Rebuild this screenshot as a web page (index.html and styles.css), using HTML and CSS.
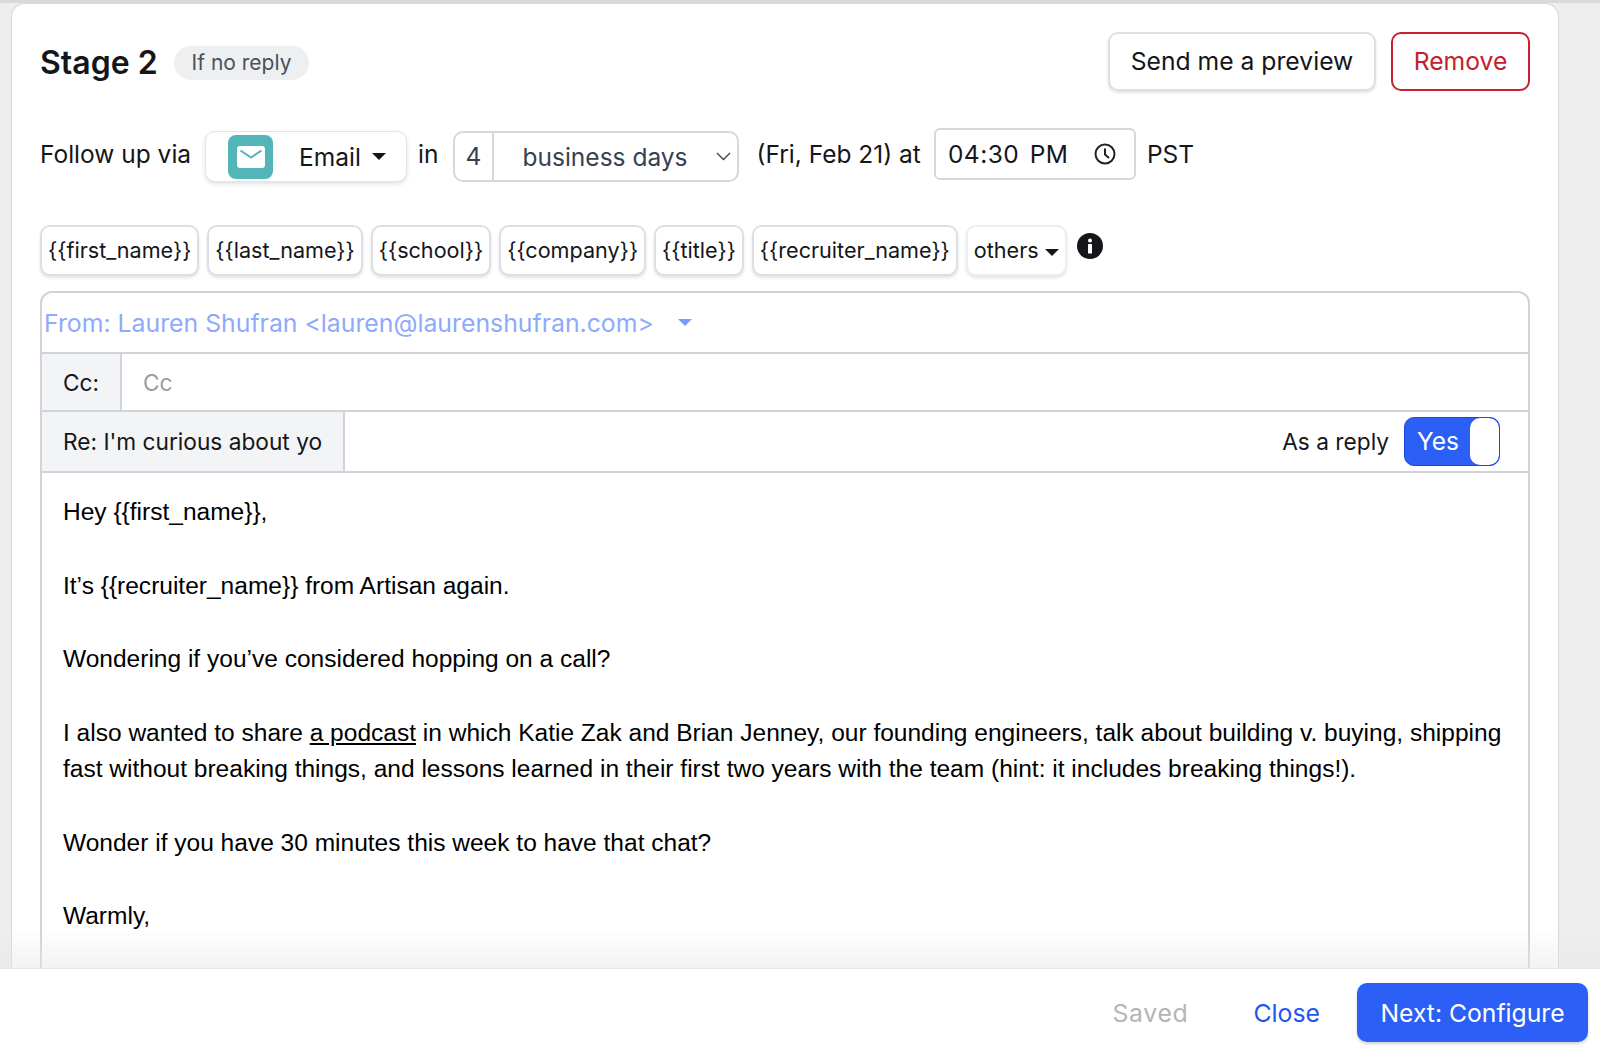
FILE: index.html
```html
<!DOCTYPE html>
<html lang="en">
<head>
<meta charset="utf-8">
<title>Stage 2</title>
<link rel="stylesheet" href="styles.css">
</head>
<body>
<div class="page">
  <main class="stage-area">
    <section class="card">
      <header class="head">
        <h2 class="title">Stage 2</h2>
        <span class="badge">If no reply</span>
        <button class="btn btn-preview">Send me a preview</button>
        <button class="btn btn-remove">Remove</button>
      </header>

      <div class="follow">
        <span class="label">Follow up via</span>
        <div class="channel">
          <span class="channel-icon">
            <svg width="28" height="22" viewBox="0 0 28 22"><rect width="28" height="22" rx="3" fill="#fff"/><path d="M3.5 4.5 14 11.5 24.500 4.500" fill="none" stroke="#52b5b8" stroke-width="2"/></svg>
          </span>
          <span class="channel-name">Email</span>
          <span class="caret"></span>
        </div>
        <span class="label in">in</span>
        <div class="days">
          <span class="days-num">4</span>
          <span class="days-unit">business days</span>
          <svg class="chev" width="15" height="9" viewBox="0 0 15 9"><path d="M1 1l6.500 6.500L14 1" fill="none" stroke="#374151" stroke-width="1.300"/></svg>
        </div>
        <span class="label date">(Fri, Feb 21) at</span>
        <div class="time">
          <span class="time-text">04:30 PM</span>
          <svg width="24" height="24" viewBox="0 0 24 24"><circle cx="12" cy="12" r="9.500" fill="none" stroke="#1f2328" stroke-width="2"/><path d="M12 6.500V12.500L16 16" fill="none" stroke="#1f2328" stroke-width="2"/></svg>
        </div>
        <span class="label tz">PST</span>
      </div>

      <div class="chips">
        <button class="chip">{{first_name}}</button>
        <button class="chip">{{last_name}}</button>
        <button class="chip">{{school}}</button>
        <button class="chip">{{company}}</button>
        <button class="chip">{{title}}</button>
        <button class="chip">{{recruiter_name}}</button>
        <button class="chip chip-others">others<span class="caret caret-sm"></span></button>
        <svg class="info" width="26" height="26" viewBox="0 0 26 26"><circle cx="13" cy="13" r="13" fill="#14161a"/><circle cx="13" cy="7.500" r="2" fill="#fff"/><rect x="11" y="11" width="4" height="9.500" rx="0.500" fill="#fff"/></svg>
      </div>

      <div class="editor">
        <div class="row row-from">
          <span class="from">From: Lauren Shufran &lt;lauren@laurenshufran.com&gt;</span>
          <span class="caret caret-from"></span>
        </div>
        <div class="row row-cc">
          <span class="cell cell-cc">Cc:</span>
          <span class="placeholder">Cc</span>
        </div>
        <div class="row row-re">
          <span class="cell cell-re">Re: I'm curious about yo</span>
          <span class="reply-label">As a reply</span>
          <span class="toggle"><span class="toggle-text">Yes</span><span class="knob"></span></span>
        </div>
        <div class="body">
          <p>Hey {{first_name}},</p>
          <p>It’s {{recruiter_name}} from Artisan again.</p>
          <p>Wondering if you’ve considered hopping on a call?</p>
          <p>I also wanted to share <u>a podcast</u> in which Katie Zak and Brian Jenney, our founding engineers, talk about building v. buying, shipping fast without breaking things, and lessons learned in their first two years with the team (hint: it includes breaking things!).</p>
          <p>Wonder if you have 30 minutes this week to have that chat?</p>
          <p>Warmly,</p>
        </div>
      </div>
    </section>
    <div class="fade"></div>
  </main>
  <footer class="foot">
    <span class="saved">Saved</span>
    <a class="close">Close</a>
    <button class="next">Next: Configure</button>
  </footer>
</div>
</body>
</html>
```
FILE: styles.css
```css
* { box-sizing: border-box; }
html, body { margin: 0; padding: 0; }
body { font-family: Inter, "Liberation Sans", sans-serif; color: #14161a; background: #fff; }
.page { width: 1600px; height: 1053px; display: flex; flex-direction: column; overflow: hidden; }
.stage-area { position: relative; flex: 1; min-height: 0; overflow: hidden; background: #eeeeee; border-top: 3px solid #d9d9d9; padding: 0 41px 0 11px; }
.card { background: #fff; border: 1px solid #d8d8d8; border-bottom: 0; border-radius: 14px 14px 0 0; padding: 28px 28px 0; height: 1000px; }
.head { display: flex; align-items: center; height: 58px; }
.title { margin: 2px 0 0; font-size: 32px; font-weight: 600; }
.badge { margin: 3px 0 0 16px; height: 34px; padding: 0 18px; border-radius: 17px; background: #eeeff1; color: #4b5058; font-size: 21px; line-height: 33px; }
.btn { font-family: inherit; font-size: 24.700px; height: 59px; background: #fff; border-radius: 10px; }
.btn-preview { margin-left: auto; width: 268px; border: 2px solid #dddfe5; box-shadow: 0 2px 3px rgba(30, 35, 60, .12); color: #14161a; padding: 0; }
.btn-remove { margin-left: 15px; width: 139px; border: 2px solid #c8202c; color: #c4202c; padding: 0; }
.follow { display: flex; align-items: flex-start; height: 54px; margin-top: 38px; font-size: 24.500px; }
.label { line-height: 52px; white-space: nowrap; }
.channel { display: flex; align-items: center; margin: 3px 0 0 14px; width: 202px; height: 51px; padding-left: 22px; border: 1px solid #e3e5ea; border-radius: 10px; box-shadow: 0 2px 4px rgba(30, 35, 60, .14); background: #fff; }
.channel-icon { display: flex; align-items: center; justify-content: center; width: 45px; height: 44px; border-radius: 8px; background: #52b5b8; }
.channel-name { margin-left: 26px; }
.caret { display: inline-block; width: 0; height: 0; border-left: 7px solid transparent; border-right: 7px solid transparent; border-top: 7px solid #14161a; margin-left: 11px; }
.in { margin-left: 11px; }
.days { display: flex; align-items: center; margin: 3px 0 0 14px; width: 286px; height: 51px; border: 2px solid #d5d7de; border-radius: 10px; color: #374151; }
.days-num { width: 39px; height: 100%; line-height: 47px; padding-left: 11px; border-right: 2px solid #d5d7de; }
.days-unit { margin-left: 29px; }
.chev { margin-left: auto; margin-right: 6px; }
.date { margin-left: 18px; }
.time { display: flex; align-items: center; justify-content: space-between; margin-left: 13px; width: 202px; height: 52px; padding: 0 17px 0 12px; border: 2px solid #d5d7de; border-radius: 6px; }
.time-text { letter-spacing: .5px; word-spacing: 3px; }
.tz { margin-left: 11px; }
.chips { display: flex; align-items: flex-start; gap: 8px; margin-top: 43px; height: 51px; }
.chip { font-family: inherit; font-size: 21.600px; height: 51px; padding: 0 6px 2px; background: #fff; color: #14161a; border: 2px solid #dddfe5; border-radius: 10px; box-shadow: 0 2px 3px rgba(30, 35, 60, .12); white-space: nowrap; }
.chip-others { border-color: #eceef1; }
.caret-sm { margin-left: 6px; vertical-align: 2px; }
.info { margin: 8px 0 0 2px; }
.editor { margin-top: 15px; border: 2px solid #d0d3da; border-bottom: 0; border-radius: 12px 12px 0 0; height: 800px; }
.row { display: flex; align-items: stretch; font-size: 22.700px; border-bottom: 2px solid #d0d3da; }
.row-from { height: 61px; align-items: center; padding-left: 2px; }
.from { color: #8fa9fb; font-size: 24.800px; }
.caret-from { margin-left: 24px; border-top-color: #7d9cf8; }
.row-cc { height: 58px; }
.row-re { height: 61px; }
.cell { display: flex; align-items: center; padding-left: 21px; background: #f3f4f6; border-right: 2px solid #d0d3da; }
.cell-cc { width: 80px; }
.cell-re { width: 303px; }
.placeholder { align-self: center; margin-left: 21px; color: #9a9da3; }
.reply-label { align-self: center; margin-left: auto; }
.toggle { align-self: center; display: flex; margin: 0 28px 0 15px; width: 96px; height: 49px; border: 1px solid #1f45e0; border-radius: 10px; background: #2b5ff5; overflow: hidden; }
.toggle-text { flex: 1; padding-left: 12px; line-height: 47px; color: #fff; font-size: 24.500px; }
.knob { width: 29px; background: #fff; border-radius: 10px; }
.body { padding: 21px 21px 0; font-family: "Liberation Sans", Arial, sans-serif; font-size: 24.530px; line-height: 36.750px; color: #000; }
.body p { margin: 0 0 36.750px; }
.fade { position: absolute; left: 0; right: 0; bottom: 0; height: 40px; background: linear-gradient(rgba(230, 230, 230, 0), rgba(230, 230, 230, .5)); }
.foot { display: flex; align-items: center; height: 85px; padding: 3px 12px 0 0; background: #fff; border-top: 1px solid #e6e6e6; font-size: 24.800px; }
.saved { margin-left: auto; color: #b5b5b5; letter-spacing: .7px; }
.close { margin-left: 65px; color: #1f55f0; }
.next { margin-left: 37px; width: 231px; height: 59px; font-family: inherit; font-size: 24.700px; color: #fff; background: #2b5ff5; border: 0; border-radius: 10px; box-shadow: 0 2px 3px rgba(30, 35, 60, .2); }
```
